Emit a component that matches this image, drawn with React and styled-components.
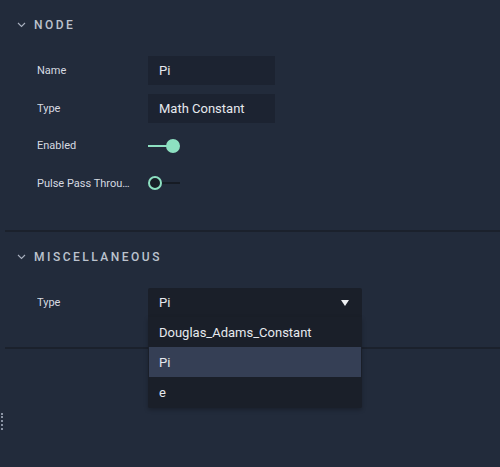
import React from "react"
import styled, { createGlobalStyle } from "styled-components"

const GlobalStyle = createGlobalStyle`
  html, body {
    margin: 0;
    padding: 0;
    background: #222b3b;
    font-family: Roboto, "Noto Sans", sans-serif;
  }
`

const Chevron = () => (
  <svg width="9" height="6" viewBox="0 0 9 6">
    <polyline points="1,1 4.5,4.5 8,1" fill="none" stroke="#a9b1bf" strokeWidth="1.1" />
  </svg>
)

const Panel = styled.div`
  position: relative;
  width: 500px;
  height: 467px;
  padding-left: 5px;
  box-sizing: border-box;
  overflow: hidden;
`

const Section = styled.section`
  padding: 10px 0 ${p => p.$bottom}px;
  border-bottom: 2px solid #1b212c;
`

const SectionHeader = styled.div`
  height: 30px;
  display: flex;
  align-items: center;
  gap: 8px;
  padding-left: 12px;
  color: #bcc3ce;
  font-size: 12px;
  font-weight: 500;
  letter-spacing: 2.5px;
  text-transform: uppercase;
`

const Rows = styled.div`
  display: flex;
  flex-direction: column;
  gap: 8.5px;
  padding-top: 16px;
`

const Row = styled.div`
  height: 29px;
  display: flex;
  align-items: center;
  padding-left: 32px;
`

const Label = styled.div`
  width: 95px;
  margin-right: 16px;
  color: #d6dae1;
  font-size: 11px;
  white-space: nowrap;
  overflow: hidden;
  text-overflow: ellipsis;
`

const Field = styled.div`
  width: 127px;
  height: 29px;
  box-sizing: border-box;
  padding-left: 11px;
  display: flex;
  align-items: center;
  background: #1c2331;
  color: #e6e9ee;
  font-size: 13px;
`

const Toggle = styled.div`
  position: relative;
  width: 32px;
  height: 14px;
  display: flex;
  align-items: center;
`

const Track = styled.div`
  position: absolute;
  left: ${p => (p.$on ? "0" : "12px")};
  right: ${p => (p.$on ? "10px" : "0")};
  height: 2px;
  background: ${p => (p.$on ? "#8de0c1" : "#161b24")};
`

const Knob = styled.div`
  position: absolute;
  top: 0;
  left: ${p => (p.$on ? "18px" : "0")};
  width: 14px;
  height: 14px;
  box-sizing: border-box;
  border-radius: 50%;
  background: ${p => (p.$on ? "#8de0c1" : "#181d27")};
  border: 2px solid #8de0c1;
`

const Select = styled.div`
  position: relative;
  width: 214px;
  height: 29px;
  box-sizing: border-box;
  padding: 0 11px;
  display: flex;
  align-items: center;
  justify-content: space-between;
  background: #1a1f29;
  border-radius: 2px 2px 0 0;
  color: #e6e9ee;
  font-size: 13px;
`

const Arrow = styled.span`
  width: 0;
  height: 0;
  border-left: 4.5px solid transparent;
  border-right: 4.5px solid transparent;
  border-top: 6px solid #eef0f3;
  margin-right: 2px;
`

const Menu = styled.div`
  position: absolute;
  top: 29px;
  left: 0;
  width: 214px;
  box-sizing: border-box;
  padding: 0 1px 1px;
  background: #1a1f29;
  border-radius: 0 0 2px 2px;
  box-shadow: 0 2px 4px rgba(0, 0, 0, 0.25);
  z-index: 10;
`

const Option = styled.div`
  height: 30px;
  padding-left: 10px;
  display: flex;
  align-items: center;
  background: ${p => (p.$active ? "#353f55" : "transparent")};
  color: #e6e9ee;
  font-size: 13px;
`

const Handle = styled.div`
  position: absolute;
  left: 1px;
  top: 413px;
  height: 17px;
  border-left: 2px dotted #8a93a3;
`

export default function App() {
  const options = ["Douglas_Adams_Constant", "Pi", "e"]
  return (
    <Panel>
      <GlobalStyle />
      <Section $bottom={32.5}>
        <SectionHeader>
          <Chevron />
          Node
        </SectionHeader>
        <Rows>
          <Row>
            <Label>Name</Label>
            <Field>Pi</Field>
          </Row>
          <Row>
            <Label>Type</Label>
            <Field>Math Constant</Field>
          </Row>
          <Row>
            <Label>Enabled</Label>
            <Toggle>
              <Track $on />
              <Knob $on />
            </Toggle>
          </Row>
          <Row>
            <Label>Pulse Pass Through</Label>
            <Toggle>
              <Track />
              <Knob />
            </Toggle>
          </Row>
        </Rows>
      </Section>
      <Section $bottom={30}>
        <SectionHeader>
          <Chevron />
          Miscellaneous
        </SectionHeader>
        <Rows>
          <Row>
            <Label>Type</Label>
            <Select>
              Pi
              <Arrow />
              <Menu>
                {options.map(o => (
                  <Option key={o} $active={o === "Pi"}>{o}</Option>
                ))}
              </Menu>
            </Select>
          </Row>
        </Rows>
      </Section>
      <Handle />
    </Panel>
  )
}
